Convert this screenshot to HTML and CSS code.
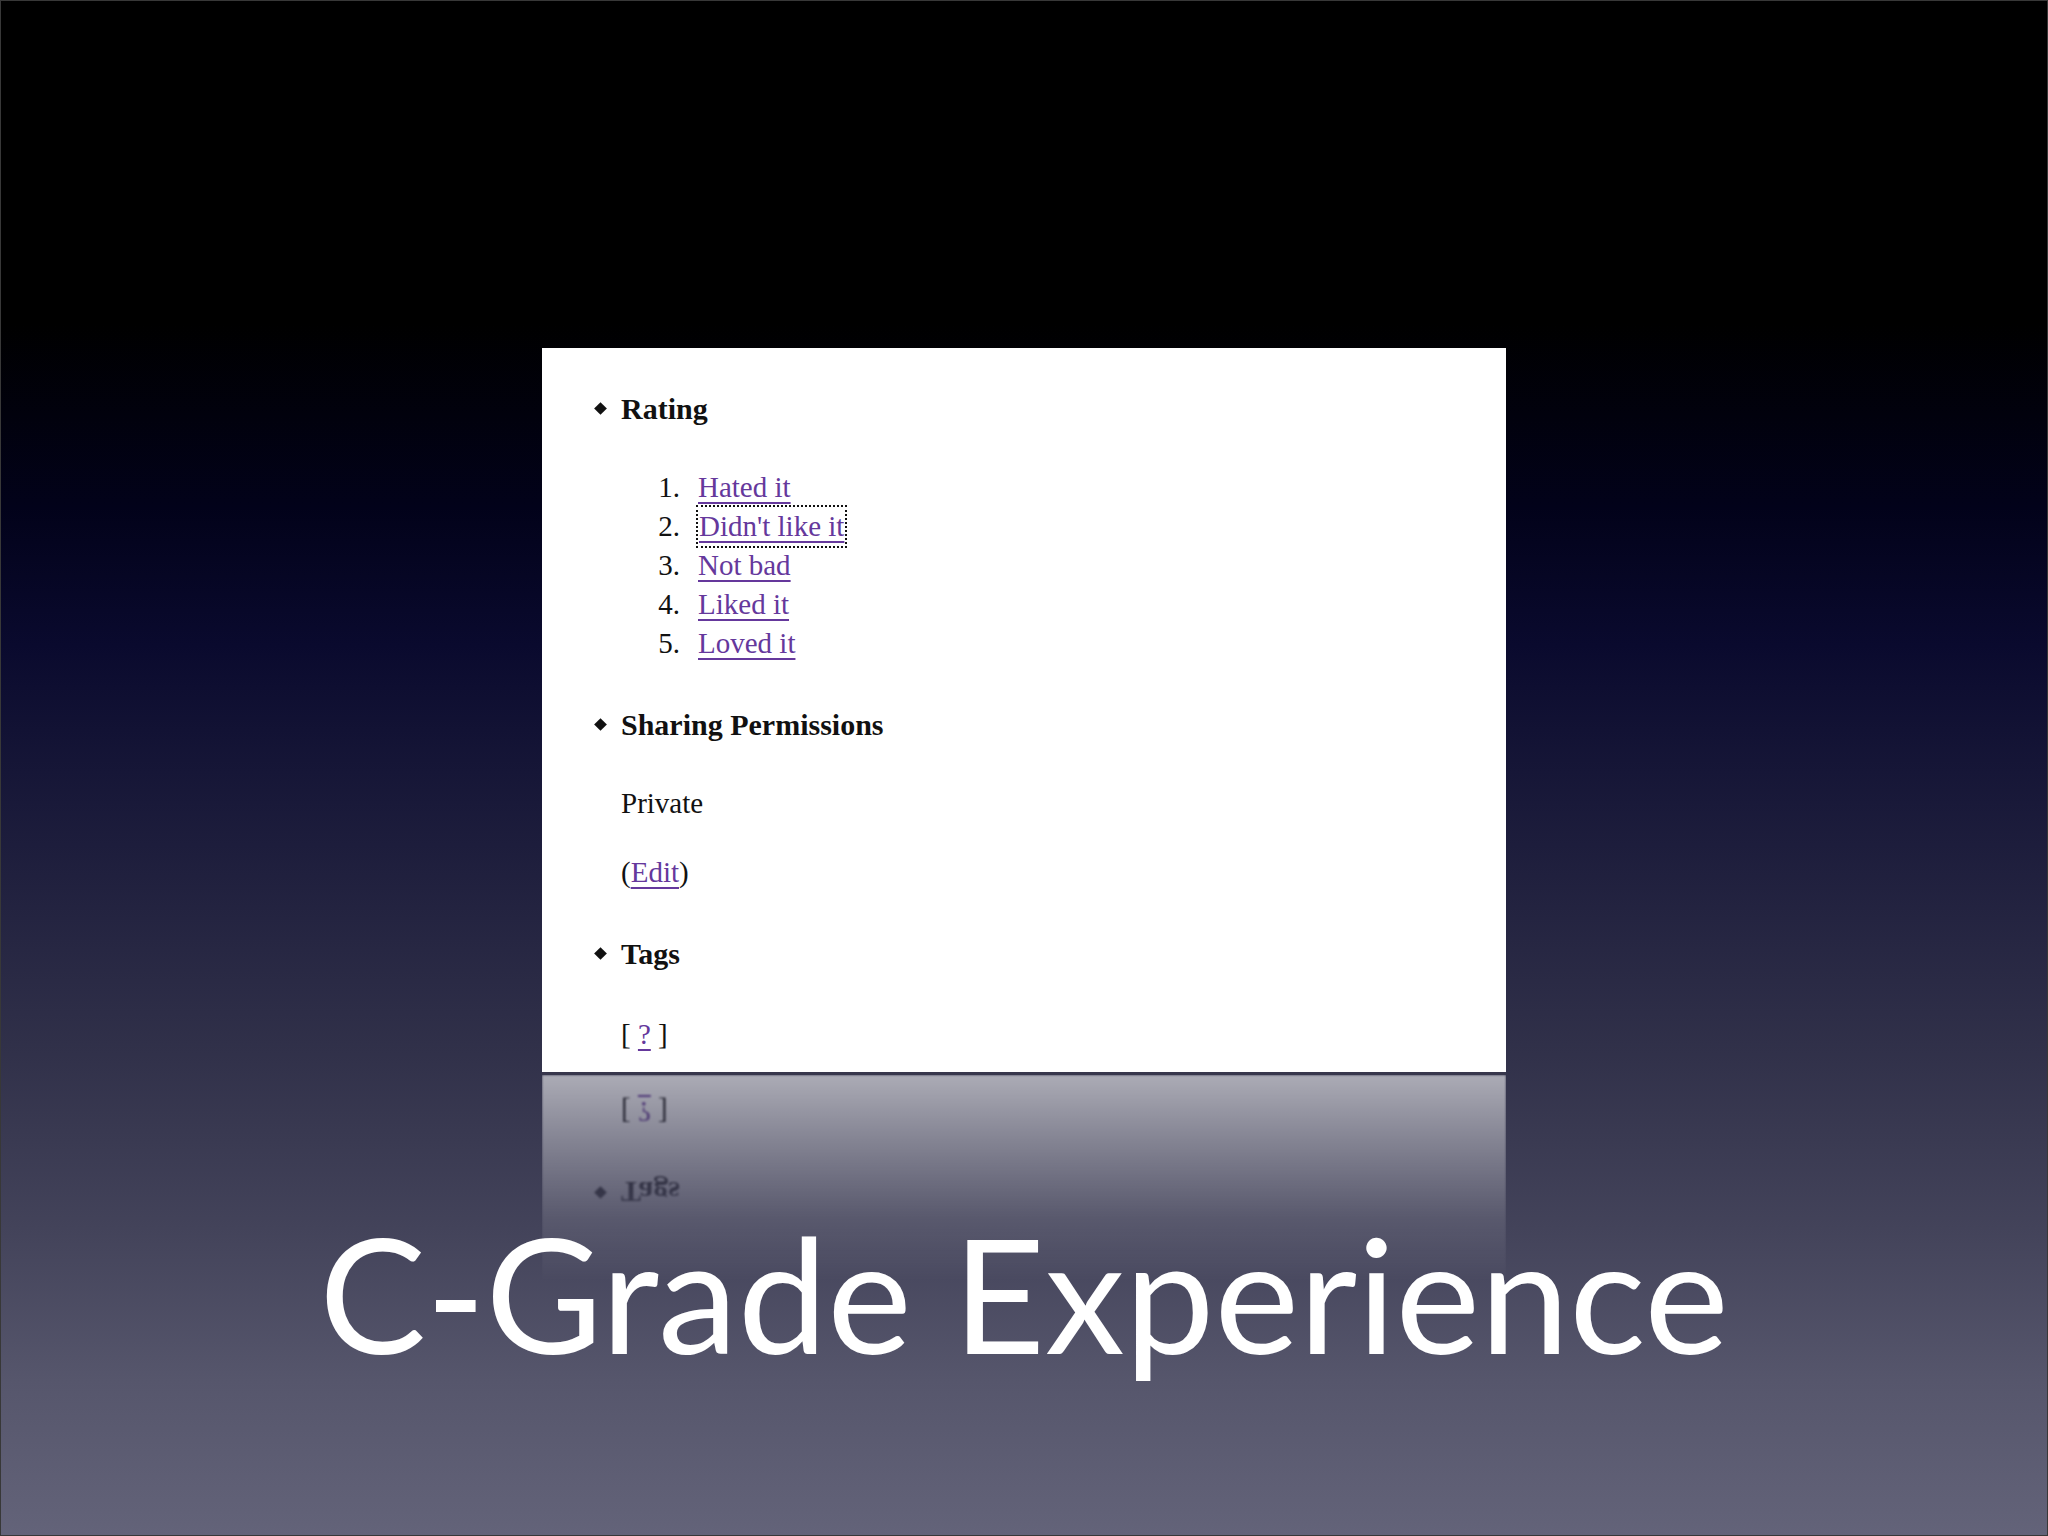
FILE: index.html
```html
<!DOCTYPE html>
<html lang="en">
<head>
<meta charset="utf-8">
<title>C-Grade Experience</title>
<link rel="stylesheet" href="styles.css">
</head>
<body>
<div class="slide">
  <div class="box">
    <ul class="sections">
      <li class="section">
        <h3 class="heading">Rating</h3>
        <ol class="ratings">
          <li class="rating"><a class="link" href="#">Hated it</a></li>
          <li class="rating"><a class="link focused" href="#">Didn't like it</a></li>
          <li class="rating"><a class="link" href="#">Not bad</a></li>
          <li class="rating"><a class="link" href="#">Liked it</a></li>
          <li class="rating"><a class="link" href="#">Loved it</a></li>
        </ol>
      </li>
      <li class="section">
        <h3 class="heading">Sharing Permissions</h3>
        <p class="value">Private</p>
        <p class="value edit">(<a class="link" href="#">Edit</a>)</p>
      </li>
      <li class="section">
        <h3 class="heading">Tags</h3>
        <p class="value tags">[ <a class="link" href="#">?</a> ]</p>
      </li>
    </ul>
  </div>
  <div class="lower">
    <div class="reflection" aria-hidden="true">
      <div class="mirrored">
        <div class="heading">Tags</div>
        <div class="value tags">[ <span class="link">?</span> ]</div>
      </div>
    </div>
    <h1 class="title">C-Grade Experience</h1>
  </div>
</div>
</body>
</html>
```

FILE: styles.css
```css
html, body {
  margin: 0;
  padding: 0;
  background: #000;
}

.slide {
  width: 2048px;
  height: 1536px;
  box-sizing: border-box;
  border: 1px solid #383838;
  overflow: hidden;
  display: flex;
  flex-direction: column;
  align-items: center;
  padding-top: 347px;
  background: linear-gradient(to bottom,
    #000000 0%,
    #000000 21%,
    #02021a 33%,
    #0a0a2e 42%,
    #1d1d3c 55%,
    #303049 68%,
    #43435a 80%,
    #56566c 90%,
    #636379 100%);
}

.box {
  width: 964px;
  height: 724px;
  flex: none;
  box-sizing: border-box;
  background: #fff;
  overflow: hidden;
  padding: 41px 0 0 79px;
  font-family: "Liberation Serif", "Times New Roman", serif;
  color: #111;
}

.sections {
  list-style: none;
  margin: 0;
  padding: 0;
}

.section + .section {
  margin-top: 42px;
}

.heading {
  display: flex;
  align-items: center;
  margin: 0 0 0 -25px;
  font-size: 30px;
  line-height: 39px;
  font-weight: bold;
}

.heading::before {
  content: "";
  flex: none;
  width: 9px;
  height: 9px;
  background: #111;
  transform: rotate(45deg);
  margin-right: 16px;
}

.ratings {
  list-style: none;
  counter-reset: item;
  margin: 40px 0 0 0;
  padding: 0;
}

.rating {
  counter-increment: item;
  display: block;
  padding-left: 77px;
  font-size: 29px;
  line-height: 39px;
  height: 39px;
}

.rating::before {
  content: counter(item) ".";
  display: inline-block;
  width: 59px;
  margin-left: -77px;
  margin-right: 18px;
  text-align: right;
}

.link {
  color: #65389c;
  text-decoration: underline;
  text-decoration-thickness: 2px;
  text-underline-offset: 5px;
}

.focused {
  outline: 2px dotted #111;
  padding: 3px 1px 4px;
}

.value {
  margin: 40px 0 0 0;
  font-size: 29px;
  line-height: 39px;
}

.value.edit {
  margin-top: 30px;
}

.value.tags {
  margin-top: 42px;
}

.lower {
  display: grid;
  width: 100%;
  flex: 1;
}

.reflection {
  grid-area: 1 / 1;
  justify-self: center;
  align-self: start;
  width: 964px;
  height: 210px;
  overflow: hidden;
  border-top: 3px solid #3b3a4d;
  box-sizing: border-box;
  opacity: 0.6;
  -webkit-mask-image: linear-gradient(to bottom, rgba(0,0,0,1) 0%, rgba(0,0,0,0.6) 35%, rgba(0,0,0,0.2) 70%, rgba(0,0,0,0) 100%);
  mask-image: linear-gradient(to bottom, rgba(0,0,0,1) 0%, rgba(0,0,0,0.6) 35%, rgba(0,0,0,0.2) 70%, rgba(0,0,0,0) 100%);
}

.mirrored {
  height: 100%;
  box-sizing: border-box;
  display: flex;
  flex-direction: column;
  justify-content: flex-end;
  padding: 0 0 17px 79px;
  background: #fff;
  color: #111;
  font-family: "Liberation Serif", "Times New Roman", serif;
  transform: scaleY(-1);
  filter: blur(1px);
}

.title {
  grid-area: 1 / 1;
  justify-self: center;
  align-self: start;
  margin: 0;
  padding-top: 160px;
  font-family: Lato, "Open Sans", sans-serif;
  font-weight: 400;
  font-size: 160px;
  line-height: 0.75;
  color: #fff;
  white-space: nowrap;
}
```
